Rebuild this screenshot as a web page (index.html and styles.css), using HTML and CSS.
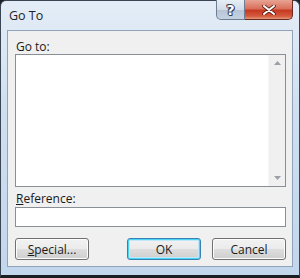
FILE: index.html
```html
<!DOCTYPE html>
<html>
<head>
<meta charset="utf-8">
<link rel="stylesheet" href="styles.css">
</head>
<body>
<div class="window">
  <div class="titlebar">
    <span class="title">Go To</span>
    <div class="caption-buttons">
      <div class="cap help"><span>?</span></div>
      <div class="cap close">
        <svg width="16" height="10" viewBox="0 0 16 10"><path d="M3 1 L13 9 M13 1 L3 9" stroke="#5a1a10" stroke-width="3.6" stroke-linecap="round"/><path d="M3 1 L13 9 M13 1 L3 9" stroke="#fff" stroke-width="2" stroke-linecap="round"/></svg>
      </div>
    </div>
  </div>
  <div class="client">
    <div class="label">Go to:</div>
    <div class="listbox">
      <div class="list-area"></div>
      <div class="scrollbar">
        <svg class="arrow" width="7" height="4" viewBox="0 0 7 4"><path d="M0 4 L3.5 0 L7 4 Z" fill="#9aa0a8"/></svg>
        <svg class="arrow" width="7" height="4" viewBox="0 0 7 4"><path d="M0 0 L3.5 4 L7 0 Z" fill="#9aa0a8"/></svg>
      </div>
    </div>
    <div class="label ref-label"><u>R</u>eference:</div>
    <div class="textbox"></div>
    <div class="buttons">
      <div class="btn"><u>S</u>pecial...</div>
      <div class="spacer"></div>
      <div class="btn default">OK</div>
      <div class="btn">Cancel</div>
    </div>
  </div>
</div>
</body>
</html>
```

FILE: styles.css
```css
html, body {
  margin: 0;
  padding: 0;
  background: #1c2026;
}
.window {
  width: 300px;
  height: 278px;
  box-sizing: border-box;
  border: 1px solid #3b4654;
  border-bottom: 3px solid #1a1e22;
  border-radius: 6px 6px 0 0;
  background: linear-gradient(180deg, #e4edf7 0%, #cfdff0 40%, #c2d6ec 100%);
  padding: 0 6px 8px 6px;
  display: flex;
  flex-direction: column;
  font-family: "Open Sans", "Noto Sans", sans-serif;
  font-size: 12px;
  color: #1a1a1a;
}
.titlebar {
  height: 29px;
  display: flex;
  justify-content: space-between;
  align-items: flex-start;
}
.title {
  margin-top: 6px;
  margin-left: 2px;
  font-size: 12.5px;
  color: #1e1e1e;
}
.caption-buttons {
  display: flex;
  margin-top: -1px;
}
.cap {
  height: 20px;
  box-sizing: border-box;
  border: 1px solid #6f7f93;
  border-top: none;
  display: flex;
  align-items: center;
  justify-content: center;
}
.help {
  width: 29px;
  border-radius: 0 0 0 5px;
  background: linear-gradient(180deg, #e6edf5 0%, #d2dce8 50%, #b7c5d6 52%, #c4d2e2 100%);
  font-family: "DejaVu Sans", sans-serif;
  font-weight: bold;
  font-size: 14px;
  color: #ffffff;
  text-shadow: 1px 0 0 #3a4250, -1px 0 0 #3a4250, 0 1px 0 #3a4250, 0 -1px 0 #3a4250, 1px 1px 0 #3a4250, -1px -1px 0 #3a4250;
}
.close {
  width: 48px;
  border-left: none;
  border-color: #6a2a22;
  border-radius: 0 0 5px 0;
  background: linear-gradient(180deg, #e8a493 0%, #d9705c 45%, #c63a22 55%, #d45a3e 85%, #e69a7a 100%);
}
.client {
  flex: 1;
  background: #f0f0f0;
  border: 1px solid #8fa3ba;
  padding: 8px 6px 0 7px;
  display: flex;
  flex-direction: column;
}
.label {
  height: 15px;
  line-height: 15px;
  padding-left: 1px;
}
.listbox {
  height: 133px;
  box-sizing: border-box;
  border: 1px solid #8a8f96;
  background: #fff;
  display: flex;
}
.list-area {
  flex: 1;
}
.scrollbar {
  width: 16px;
  background: #f0f0f0;
  border-left: 1px solid #f6f6f6;
  display: flex;
  flex-direction: column;
  justify-content: space-between;
  align-items: center;
  padding: 6px 0 6px 0;
}
.ref-label {
  margin-top: 4px;
  margin-bottom: 1px;
}
.textbox {
  height: 20px;
  box-sizing: border-box;
  border: 1px solid #8a8f96;
  background: #fff;
}
.buttons {
  display: flex;
  margin-top: 11px;
  gap: 11px;
}
.spacer {
  flex: 1;
}
.btn {
  width: 74px;
  height: 22px;
  box-sizing: border-box;
  border: 1px solid #707070;
  border-radius: 3px;
  background: linear-gradient(180deg, #f2f2f2 0%, #ebebeb 48%, #dddddd 52%, #cfcfcf 100%);
  box-shadow: inset 0 0 0 1px #fcfcfc;
  display: flex;
  align-items: center;
  justify-content: center;
  font-size: 12px;
}
.btn.default {
  border-color: #3c7fb1;
  box-shadow: inset 0 0 0 1px #48d4f4, inset 0 0 0 2px #bfe8f8;
}
```
